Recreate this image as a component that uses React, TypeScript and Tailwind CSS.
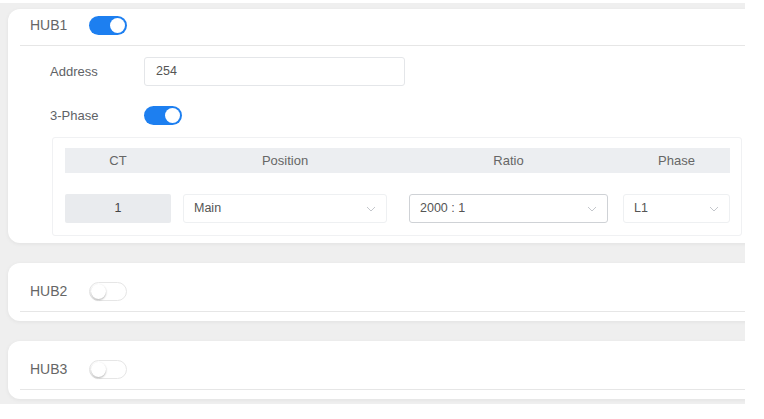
import React from "react";

function Toggle({ on }: { on: boolean }) {
  return on ? (
    <div className="w-[38px] h-[19px] rounded-full bg-[#1d7ff0] flex items-center justify-end pr-[2px] shrink-0">
      <div className="w-[15px] h-[15px] rounded-full bg-white" />
    </div>
  ) : (
    <div className="w-[38px] h-[19px] rounded-full bg-white border border-[#e6e6e6] flex items-center pl-[1px] shrink-0">
      <div className="w-[15px] h-[15px] rounded-full bg-white shadow-[0_1px_2px_rgba(0,0,0,0.3)]" />
    </div>
  );
}

function Chevron() {
  return (
    <svg width="10" height="6" viewBox="0 0 10 6" className="shrink-0">
      <polyline points="1,1 5,5 9,1" fill="none" stroke="#c4c7cc" strokeWidth="1" />
    </svg>
  );
}

function Select({ value, w, dark }: { value: string; w: string; dark?: boolean }) {
  return (
    <div
      className={`${w} h-[29px] rounded-[3px] border ${dark ? "border-[#cfd2d6]" : "border-[#eef0f2]"} bg-white flex items-center justify-between pl-[10px] pr-[10px] text-[12.5px] text-[#555]`}
    >
      <span>{value}</span>
      <Chevron />
    </div>
  );
}

function CardHeader({ title, on, first }: { title: string; on: boolean; first?: boolean }) {
  return (
    <div
      className={`mx-[12px] border-b border-[#e6e6e6] flex items-center gap-[22px] pl-[10px] ${first ? "h-[37px] pb-[4px]" : "h-[49px] pt-[8px]"}`}
    >
      <span className="text-[14px] text-[#666]">{title}</span>
      <Toggle on={on} />
    </div>
  );
}

export default function App() {
  return (
    <div className="w-[764px] h-[419px] bg-white font-['Liberation_Sans',Arial,sans-serif] pt-[3px]">
      <div className="w-[745px] h-[401px] bg-[#efefef] overflow-hidden pt-[6px] flex flex-col gap-[20px]">
        {/* HUB1 */}
        <div className="ml-[8px] w-[760px] shrink-0 bg-white rounded-[12px] shadow-[0_1px_4px_rgba(0,0,0,0.06)] pb-[7px]">
          <CardHeader title="HUB1" on first />
          <div className="pl-[42px] pt-[11px]">
            <div className="flex items-center h-[29px]">
              <span className="w-[94px] text-[13px] text-[#606266]">Address</span>
              <div className="w-[261px] h-[29px] rounded-[3px] border border-[#e4e6e9] flex items-center pl-[11px] text-[12.5px] text-[#555]">
                254
              </div>
            </div>
            <div className="flex items-center h-[29px] mt-[15px]">
              <span className="w-[94px] text-[13px] text-[#606266]">3-Phase</span>
              <Toggle on />
            </div>
            <div className="mt-[7px] ml-[2px] w-[690px] border border-[#f0f1f3] rounded-[3px] pt-[10px] pb-[12px] pl-[12px]">
              <div className="flex h-[25px] w-[665px] bg-[#eceef1] items-center text-[13px] text-[#666]">
                <span className="w-[106px] text-center">CT</span>
                <span className="w-[204px] ml-[12px] text-center">Position</span>
                <span className="w-[199px] ml-[22px] text-center">Ratio</span>
                <span className="w-[107px] ml-[15px] text-center">Phase</span>
              </div>
              <div className="flex mt-[21px]">
                <div className="w-[106px] h-[29px] rounded-[2px] bg-[#e9ebee] flex items-center justify-center text-[12.5px] text-[#444]">
                  1
                </div>
                <div className="ml-[12px]">
                  <Select value="Main" w="w-[204px]" />
                </div>
                <div className="ml-[22px]">
                  <Select value="2000 : 1" w="w-[199px]" dark />
                </div>
                <div className="ml-[15px]">
                  <Select value="L1" w="w-[107px]" />
                </div>
              </div>
            </div>
          </div>
        </div>
        {/* HUB2 */}
        <div className="ml-[8px] w-[760px] shrink-0 bg-white rounded-[12px] shadow-[0_1px_4px_rgba(0,0,0,0.06)] pb-[9px]">
          <CardHeader title="HUB2" on={false} />
        </div>
        {/* HUB3 */}
        <div className="ml-[8px] w-[760px] shrink-0 bg-white rounded-[12px] shadow-[0_1px_4px_rgba(0,0,0,0.06)] pb-[9px]">
          <CardHeader title="HUB3" on={false} />
        </div>
      </div>
    </div>
  );
}
